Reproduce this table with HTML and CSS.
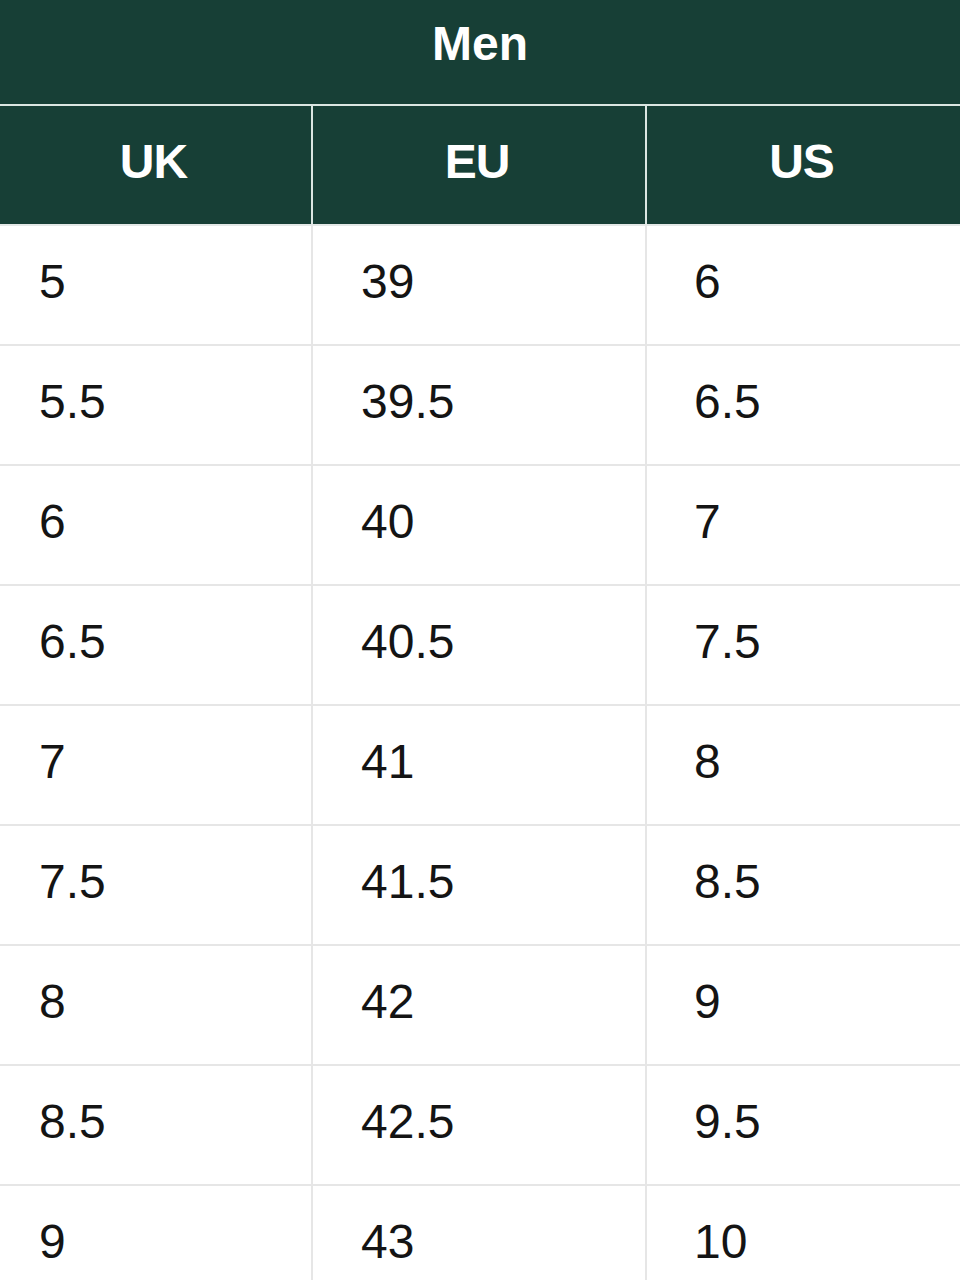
FILE: index.html
```html
<!DOCTYPE html>
<html lang="en">
<head>
<meta charset="utf-8">
<title>Men size chart</title>
<link rel="stylesheet" href="styles.css">
</head>
<body>
<div class="chart">
  <div class="title">Men</div>
  <div class="head">
    <div class="hcell">UK</div>
    <div class="hcell">EU</div>
    <div class="hcell">US</div>
  </div>
  <div class="body">
    <div class="cell c1">5</div><div class="cell c2">39</div><div class="cell c3">6</div>
    <div class="cell c1">5.5</div><div class="cell c2">39.5</div><div class="cell c3">6.5</div>
    <div class="cell c1">6</div><div class="cell c2">40</div><div class="cell c3">7</div>
    <div class="cell c1">6.5</div><div class="cell c2">40.5</div><div class="cell c3">7.5</div>
    <div class="cell c1">7</div><div class="cell c2">41</div><div class="cell c3">8</div>
    <div class="cell c1">7.5</div><div class="cell c2">41.5</div><div class="cell c3">8.5</div>
    <div class="cell c1">8</div><div class="cell c2">42</div><div class="cell c3">9</div>
    <div class="cell c1">8.5</div><div class="cell c2">42.5</div><div class="cell c3">9.5</div>
    <div class="cell c1">9</div><div class="cell c2">43</div><div class="cell c3">10</div>
  </div>
</div>
</body>
</html>
```
FILE: styles.css
```css
html, body {
  margin: 0;
  padding: 0;
  background: #ffffff;
}
.chart {
  width: 960px;
  font-family: "Liberation Sans", Arial, sans-serif;
  font-size: 48px;
  line-height: 48px;
}
.title {
  height: 104px;
  box-sizing: border-box;
  padding-top: 20px;
  background: #173f36;
  color: #ffffff;
  font-weight: 700;
  text-align: center;
}
.head {
  display: grid;
  grid-template-columns: 311px 332px 313px;
  column-gap: 2px;
  background: #dbe6e2;
  border-top: 2px solid #dbe6e2;
  border-bottom: 2px solid #e4e8e7;
}
.hcell {
  height: 118px;
  box-sizing: border-box;
  padding-top: 32px;
  padding-right: 4px;
  background: #173f36;
  color: #ffffff;
  font-weight: 700;
  text-align: center;
  letter-spacing: -1px;
}
.body {
  display: grid;
  grid-template-columns: 311px 332px 313px;
  gap: 2px;
  background: #e6e6e6;
}
.cell {
  height: 118px;
  box-sizing: border-box;
  padding-top: 32px;
  background: #ffffff;
  color: #141414;
}
.c1 { padding-left: 39px; }
.c2 { padding-left: 48px; }
.c3 { padding-left: 47px; }
```
